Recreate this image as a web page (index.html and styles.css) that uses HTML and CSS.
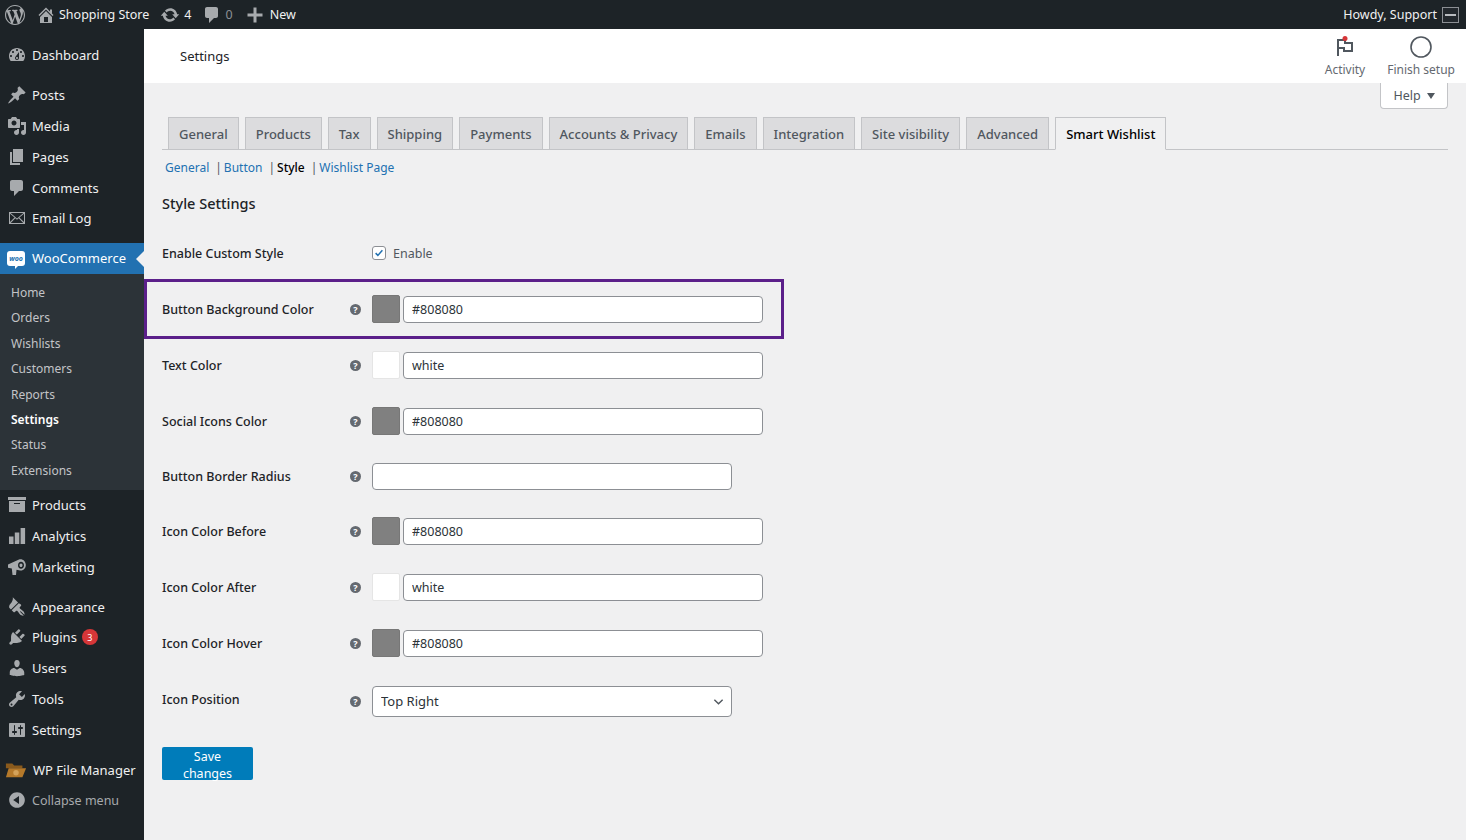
FILE: index.html
```html
<!DOCTYPE html>
<html lang="en">
<head>
  <meta charset="UTF-8">
  <title>Settings</title>
  <link rel="stylesheet" href="styles.css">
</head>
<body>
  <div class="topbar">
    <div class="top-left">
      <svg class="top-wp" viewBox="0 0 20 20"><path d="M20 10c0-5.51-4.49-10-10-10C4.48 0 0 4.49 0 10c0 5.52 4.48 10 10 10 5.51 0 10-4.48 10-10zM7.78 15.37L4.37 6.22c.55-.02 1.17-.08 1.17-.08.5-.06.44-1.13-.06-1.11 0 0-1.45.11-2.37.11-.18 0-.37 0-.58-.01C4.12 2.69 6.87 1.11 10 1.11c2.33 0 4.45.87 6.05 2.34-.68-.11-1.65.39-1.65 1.58 0 .74.45 1.36.9 2.1.35.61.55 1.36.55 2.46 0 1.49-1.4 5-1.4 5l-3.03-8.37c.54-.02.82-.17.82-.17.5-.05.44-1.25-.06-1.22 0 0-1.44.12-2.38.12-.87 0-2.33-.12-2.33-.12-.5-.03-.56 1.2-.06 1.22l.92.08 1.26 3.41zM17.41 10c.24-.64.74-1.87.43-4.25.7 1.29 1.05 2.71 1.05 4.25 0 3.29-1.73 6.24-4.4 7.78.97-2.59 1.94-5.2 2.92-7.78zM6.1 18.09C3.12 16.65 1.11 13.53 1.11 10c0-1.3.23-2.48.72-3.59C3.25 10.3 4.67 14.2 6.1 18.09zm4.03-6.63l2.58 6.98c-.86.29-1.76.45-2.71.45-.79 0-1.57-.11-2.29-.33.81-2.38 1.62-4.74 2.42-7.1z"/></svg>
      <span class="top-item site"><svg viewBox="0 0 20 20"><path d="M16 8.5l1.53 1.53-1.06 1.06L10 4.62l-6.47 6.47-1.06-1.06L10 2.5l4 4v-2h2v4zm-6-2.46l6 5.99V18H4v-5.97zM12 17v-5H8v5h4z"/></svg>Shopping Store</span>
      <span class="top-item updates"><svg viewBox="0 0 20 20"><path d="M10.2 3.28c3.53 0 6.43 2.61 6.92 6h2.08l-3.5 4-3.5-4h2.32c-.45-1.97-2.21-3.44-4.32-3.44-1.45 0-2.73.71-3.54 1.78L4.95 5.66C6.23 4.2 8.11 3.28 10.2 3.28zm-.4 13.44c-3.52 0-6.43-2.61-6.92-6H.8l3.5-4c1.17 1.33 2.33 2.67 3.5 4H5.48c.45 1.97 2.21 3.44 4.32 3.44 1.45 0 2.73-.71 3.54-1.78l1.71 1.95c-1.28 1.46-3.15 2.39-5.25 2.39z"/></svg>4</span>
      <span class="top-item comments"><svg viewBox="0 0 20 20"><path d="M5 2h9c1.1 0 2 .9 2 2v7c0 1.1-.9 2-2 2h-2l-5 5v-5H5c-1.1 0-2-.9-2-2V4c0-1.1.9-2 2-2z"/></svg><span class="muted">0</span></span>
      <span class="top-item new"><svg viewBox="0 0 20 20"><path d="M17.5 8.5v3h-6v6h-3v-6h-6v-3h6v-6h3v6h6z"/></svg>New</span>
    </div>
    <div class="top-right">Howdy, Support<span class="avatar"><i></i></span></div>
  </div>

  <div class="layout">
    <nav class="sidebar">
      <ul class="menu first">
        <li><svg viewBox="0 0 20 20"><path d="M3.76 16h12.48c1.1-1.37 1.76-3.11 1.76-5 0-4.42-3.58-8-8-8s-8 3.58-8 8c0 1.89.66 3.63 1.76 5zM10 4c.55 0 1 .45 1 1s-.45 1-1 1-1-.45-1-1 .45-1 1-1zM6 6c.55 0 1 .45 1 1s-.45 1-1 1-1-.45-1-1 .45-1 1-1zm8 0c.55 0 1 .45 1 1s-.45 1-1 1-1-.45-1-1 .45-1 1-1zm-5.37 5.55L12 7v6c0 1.1-.9 2-2 2s-2-.9-2-2c0-.57.24-1.08.63-1.45zM4 10c.55 0 1 .45 1 1s-.45 1-1 1-1-.45-1-1 .45-1 1-1zm12 0c.55 0 1 .45 1 1s-.45 1-1 1-1-.45-1-1 .45-1 1-1zm-5 3c0-.55-.45-1-1-1s-1 .45-1 1 .45 1 1 1 1-.45 1-1z"/></svg>Dashboard</li>
      </ul>
      <ul class="menu">
        <li><svg viewBox="0 0 20 20"><path d="M10.44 3.02l1.82-1.82 6.36 6.35-1.83 1.82c-1.05-.68-2.48-.57-3.41.36l-.75.75c-.92.93-1.04 2.35-.35 3.41l-1.83 1.82-2.41-2.41-2.8 2.79c-.42.42-3.38 2.71-3.8 2.29s1.86-3.39 2.28-3.81l2.79-2.79L4.1 9.36l1.83-1.82c1.05.69 2.48.57 3.4-.36l.75-.75c.93-.92 1.05-2.35.36-3.41z"/></svg>Posts</li>
        <li><svg viewBox="0 0 20 20"><path d="M13 11V4c0-.55-.45-1-1-1h-1.67L9 1H5L3.67 3H2c-.55 0-1 .45-1 1v7c0 .55.45 1 1 1h10c.55 0 1-.45 1-1zM7 4.5c1.38 0 2.5 1.12 2.5 2.5S8.38 9.5 7 9.5 4.5 8.38 4.5 7 5.62 4.5 7 4.5zM14 6h5v10.5c0 1.38-1.12 2.5-2.5 2.5S14 17.88 14 16.5s1.12-2.5 2.5-2.5c.17 0 .34.02.5.05V9h-3V6zm-4 8.05V13h2v3.5c0 1.38-1.12 2.5-2.5 2.5S7 17.88 7 16.5 8.12 14 9.5 14c.17 0 .34.02.5.05z"/></svg>Media</li>
        <li><svg viewBox="0 0 20 20"><path d="M6 15V2h10v13H6zm-1 1h8v2H3V5h2v11z"/></svg>Pages</li>
        <li><svg viewBox="0 0 20 20"><path d="M5 2h9c1.1 0 2 .9 2 2v7c0 1.1-.9 2-2 2h-2l-5 5v-5H5c-1.1 0-2-.9-2-2V4c0-1.1.9-2 2-2z"/></svg>Comments</li>
        <li><svg viewBox="0 0 20 20"><path fill-rule="evenodd" d="M2 4h16v12H2V4zm1.6 1L10 10.4 16.4 5H3.6zM3 5.7v8.2l4.6-4.3L3 5.7zm.7 9.3h12.6l-4.6-4.7L10 11.8 8.300 10.300 3.700 15zM17 13.900V5.700l-4.600 3.900 4.600 4.300z"/></svg>Email Log</li>
      </ul>
      <div class="woo-group">
        <div class="woo-head">
          <span class="woo-logo"><b>woo</b></span>WooCommerce
        </div>
        <ul class="submenu">
          <li>Home</li>
          <li>Orders</li>
          <li>Wishlists</li>
          <li>Customers</li>
          <li>Reports</li>
          <li class="current">Settings</li>
          <li>Status</li>
          <li>Extensions</li>
        </ul>
      </div>
      <ul class="menu flush">
        <li><svg viewBox="0 0 20 20"><path d="M19 2v3H1V2h18zM2 6h16v11H2V6zm11 3V8H7v1h6z"/></svg>Products</li>
        <li><svg viewBox="0 0 20 20"><path d="M2 10.500h4.500V18H2zM7.800 6.500h4.500V18H7.800zM13.600 2h4.500v16h-4.500z"/></svg>Analytics</li>
        <li><svg viewBox="0 0 20 20"><path fill-rule="evenodd" d="M1 7.500l11-5c3-1.200 6.500 1.200 6.800 5 .2 3.800-2.600 6.500-5.600 6L9.500 12.800 9 18H5.500l-.7-6.500-3.800-.8v-3.200zM14 4.800c-1.700 0-3 1.500-3 3.500s1.300 3.500 3 3.500 3-1.500 3-3.500-1.300-3.500-3-3.500zm0 1.700c.9 0 1.500.8 1.500 1.800s-.6 1.800-1.500 1.800-1.500-.8-1.500-1.800.6-1.800 1.500-1.800z"/></svg>Marketing</li>
      </ul>
      <ul class="menu">
        <li><svg viewBox="0 0 20 20"><path d="M14.480 11.060L7.410 3.990l1.500-1.500c.5-.56 2.300-.47 3.510.32 1.210.8 1.430 1.280 2.910 2.100 1.180.64 2.450 1.260 4.450.85zm-.71.71L6.700 4.700 4.930 6.470c-.39.39-.39 1.020 0 1.410l1.060 1.060c.39.39.39 1.030 0 1.420-.6.6-1.430 1.110-2.210 1.690-.35.26-.7.53-1.010.84-1.340 1.340-1.780 3.200-1.240 3.740l3.360-3.360c.2-.2.51-.2.71 0 .19.19.19.51 0 .7l-3.360 3.370c.54.54 2.400.1 3.740-1.240.31-.31.58-.66.84-1.010.58-.78 1.090-1.610 1.690-2.210.39-.39 1.030-.39 1.420 0l1.060 1.060c.39.39 1.020.39 1.410 0z" transform="rotate(-90 10 10)"/></svg>Appearance</li>
        <li><svg viewBox="0 0 20 20"><path d="M13.110 4.360L9.870 7.600 8 5.730l3.240-3.240c.35-.34 1.050-.2 1.560.32.52.51.66 1.210.31 1.550zm-8 1.770l.91-1.120 9.010 9.010-1.190.84c-.71.71-2.630 1.160-3.820 1.160H6.140L4.900 17.260c-.59.59-1.540.59-2.120 0-.59-.58-.59-1.530 0-2.120l1.240-1.240v-3.880c0-1.130.4-3.190 1.090-3.890zm7.260 3.970l3.240-3.240c.34-.35 1.040-.21 1.550.31.52.51.66 1.210.31 1.550l-3.240 3.250z"/></svg>Plugins<span class="badge">3</span></li>
        <li><svg viewBox="0 0 20 20"><path d="M10 9.250c-2.270 0-2.730-3.440-2.730-3.440C7 4.020 7.820 2 9.970 2c2.160 0 2.980 2.020 2.710 3.810 0 0-.41 3.440-2.680 3.440zm0 2.570L12.720 10c2.390 0 4.520 2.330 4.520 4.530v2.490s-3.650 1.130-7.240 1.130c-3.650 0-7.240-1.130-7.240-1.130v-2.490c0-2.250 1.940-4.480 4.470-4.480z"/></svg>Users</li>
        <li><svg viewBox="0 0 20 20"><path d="M16.680 9.770c-1.340 1.340-3.300 1.670-4.950.99l-5.410 6.520c-.99.99-2.590.99-3.580 0s-.99-2.590 0-3.570l6.520-5.420c-.68-1.650-.35-3.610.99-4.950 1.280-1.280 3.120-1.620 4.720-1.060l-2.890 2.890 2.820 2.820 2.860-2.870c.53 1.580.18 3.390-1.080 4.650zM3.810 16.210c.4.39 1.040.39 1.430 0 .4-.4.4-1.040 0-1.430-.39-.4-1.030-.4-1.430 0-.39.39-.39 1.030 0 1.430z"/></svg>Tools</li>
        <li><svg viewBox="0 0 20 20"><path d="M18 16V4c0-.55-.45-1-1-1H3c-.55 0-1 .45-1 1v12c0 .55.45 1 1 1h14c.55 0 1-.45 1-1zM8 11h1c.55 0 1 .45 1 1s-.45 1-1 1H8v1.500c0 .28-.22.5-.5.5s-.5-.22-.5-.5V13H6c-.55 0-1-.45-1-1s.45-1 1-1h1V5.500c0-.28.22-.5.5-.5s.5.22.5.5V11zm5-2h-1c-.55 0-1-.45-1-1s.45-1 1-1h1V5.500c0-.28.22-.5.5-.5s.5.22.5.5V7h1c.55 0 1 .45 1 1s-.45 1-1 1h-1v5.500c0 .28-.22.5-.5.5s-.5-.22-.5-.5V9z"/></svg>Settings</li>
      </ul>
      <ul class="menu">
        <li><svg class="folder" viewBox="0 0 24 20"><path fill="#8a5a1c" d="M1 3h7l2 2h9v3H1z"/><path fill="#b5792a" d="M1 18L4 8h19l-4 10z"/><circle cx="12" cy="13" r="3" fill="#d4a25a"/></svg>WP File Manager</li>
        <li class="collapse"><svg viewBox="0 0 20 20"><path d="M10 2.160c4.330 0 7.840 3.510 7.840 7.840s-3.510 7.840-7.840 7.840S2.160 14.330 2.160 10 5.710 2.160 10 2.160zm2 11.720V6.120L6.180 9.970z"/></svg>Collapse menu</li>
      </ul>
    </nav>

    <main class="main">
      <header class="page-head">
        <h1>Settings</h1>
        <div class="head-actions">
          <div class="head-action">
            <svg class="flag" viewBox="0 0 24 24"><path d="M5 21V5h7v3h7v8h-8v-3H5" fill="none" stroke="#50575e" stroke-width="2"/><circle cx="12" cy="3.500" r="2.500" fill="#d63638"/></svg>
            <span>Activity</span>
          </div>
          <div class="head-action setup">
            <svg class="ring" viewBox="0 0 24 24"><circle cx="12" cy="12" r="10" fill="none" stroke="#50575e" stroke-width="1.600"/></svg>
            <span>Finish setup</span>
          </div>
        </div>
      </header>

      <div class="content">
        <div class="help-wrap"><div class="help-tab">Help<i class="help-arrow"></i></div></div>

        <div class="tabs">
          <a class="tab">General</a>
          <a class="tab">Products</a>
          <a class="tab">Tax</a>
          <a class="tab">Shipping</a>
          <a class="tab">Payments</a>
          <a class="tab">Accounts &amp; Privacy</a>
          <a class="tab">Emails</a>
          <a class="tab">Integration</a>
          <a class="tab">Site visibility</a>
          <a class="tab">Advanced</a>
          <a class="tab active">Smart Wishlist</a>
        </div>

        <div class="subnav">
          <a>General</a><span class="sep">|</span><a>Button</a><span class="sep">|</span><b>Style</b><span class="sep">|</span><a>Wishlist Page</a>
        </div>

        <h2>Style Settings</h2>

        <form class="settings">
          <div class="row enable-row">
            <label>Enable Custom Style</label>
            <span class="tip none"></span>
            <span class="check-field">
              <span class="checkbox"><svg viewBox="0 0 16 16"><path d="M3.500 8.200l3 3 6-7" fill="none" stroke="#2271b1" stroke-width="2"/></svg></span>Enable
            </span>
          </div>
          <div class="row highlight">
            <label>Button Background Color</label>
            <span class="tip">?</span>
            <span class="swatch grey"></span>
            <input class="text" type="text" value="#808080">
          </div>
          <div class="row">
            <label>Text Color</label>
            <span class="tip">?</span>
            <span class="swatch white"></span>
            <input class="text" type="text" value="white">
          </div>
          <div class="row">
            <label>Social Icons Color</label>
            <span class="tip">?</span>
            <span class="swatch grey"></span>
            <input class="text" type="text" value="#808080">
          </div>
          <div class="row short">
            <label>Button Border Radius</label>
            <span class="tip">?</span>
            <input class="text wide" type="text">
          </div>
          <div class="row">
            <label>Icon Color Before</label>
            <span class="tip">?</span>
            <span class="swatch grey"></span>
            <input class="text" type="text" value="#808080">
          </div>
          <div class="row">
            <label>Icon Color After</label>
            <span class="tip">?</span>
            <span class="swatch white"></span>
            <input class="text" type="text" value="white">
          </div>
          <div class="row">
            <label>Icon Color Hover</label>
            <span class="tip">?</span>
            <span class="swatch grey"></span>
            <input class="text" type="text" value="#808080">
          </div>
          <div class="row tall">
            <label>Icon Position</label>
            <span class="tip">?</span>
            <span class="select-wrap">
              <select class="select"><option>Top Right</option></select>
              <svg class="chevron" viewBox="0 0 12 8"><path d="M1.500 1.500L6 6l4.500-4.500" fill="none" stroke="#50575e" stroke-width="1.500"/></svg>
            </span>
          </div>
          <button class="save" type="button">Save changes</button>
        </form>
      </div>
    </main>
  </div>
</body>
</html>
```
FILE: styles.css
```css
* { box-sizing: border-box; }
html, body { margin: 0; padding: 0; height: 840px; overflow: hidden; }
body { background: #f0f0f1; font-family: "Noto Sans", sans-serif; font-size: 12.5px; color: #1d2327; }
ul { list-style: none; margin: 0; padding: 0; }

.topbar { height: 29px; background: #1d2327; color: #f0f0f1; display: flex; justify-content: space-between; align-items: center; padding-right: 7px; font-size: 12.5px; }
.top-left { display: flex; align-items: center; }
.topbar svg { fill: #a7aaad; }
.top-wp { width: 20px; height: 20px; margin-left: 5px; }
.top-item { display: flex; align-items: center; }
.top-item svg { width: 20px; height: 20px; }
.site { margin-left: 11px; gap: 3px; }
.updates { margin-left: 11px; gap: 4px; }
.comments { margin-left: 11px; gap: 3px; }
.new { margin-left: 12px; gap: 5px; }
.muted { color: #8c8f94; }
.top-right { display: flex; align-items: center; gap: 5px; }
.avatar { width: 17px; height: 16px; border: 1px solid #8c8f94; background: #23282d; display: flex; align-items: center; padding-left: 2px; }
.avatar i { display: block; width: 11px; height: 2px; background: #b9bcc0; }

.layout { display: flex; height: 811px; }
.sidebar { width: 144px; flex: none; background: #1d2327; color: #f0f0f1; font-size: 13px; padding-top: 11px; }
.menu { margin-top: 9px; }
.menu.first { margin-top: 0; }
.menu.flush { margin-top: 0; }
.menu li { height: 30.8px; display: flex; align-items: center; padding-left: 7px; }
.menu li svg { width: 20px; height: 20px; flex: none; margin-right: 5px; fill: #a7aaad; }
.menu li svg.folder { width: 22px; margin-left: -2px; margin-right: 6px; }
.menu li.collapse { color: #a7aaad; font-size: 12.5px; }
.badge { width: 16px; height: 16px; margin-left: 5px; border-radius: 50%; background: #d63638; color: #fff; font-size: 9px; display: flex; align-items: center; justify-content: center; }

.woo-group { margin-top: 9px; }
.woo-head { height: 31px; background: #2271b1; color: #fff; display: flex; align-items: center; padding-left: 7px; position: relative; }
.woo-head::after { content: ""; position: absolute; right: 0; top: 8px; border: 8px solid transparent; border-right-color: #f0f0f1; border-left-width: 0; }
.woo-logo { width: 18px; height: 15px; background: #fff; border-radius: 3px; margin-right: 7px; color: #2271b1; display: flex; align-items: center; justify-content: center; position: relative; }
.woo-logo b { font-size: 7px; font-weight: 700; font-style: italic; line-height: 1; }
.woo-logo::after { content: ""; position: absolute; left: 8px; bottom: -3px; border: 2px solid transparent; border-top-color: #fff; border-left-color: #fff; }
.submenu { background: #2c3338; padding: 6px 0 7px; height: 216px; color: #c3c4c7; font-size: 12px; }
.submenu li { height: 25.4px; display: flex; align-items: center; padding-left: 11px; }
.submenu li.current { color: #fff; font-weight: 600; }

.main { flex: 1; display: flex; flex-direction: column; }
.page-head { height: 54px; background: #fff; display: flex; justify-content: space-between; align-items: center; padding: 0 11px 0 36px; }
.page-head h1 { margin: 0; font-size: 13px; font-weight: 400; color: #1d2327; }
.head-actions { display: flex; gap: 22px; align-self: stretch; padding-top: 6px; }
.head-action { display: flex; flex-direction: column; align-items: center; color: #646970; font-size: 12px; }
.flag, .ring { width: 24px; height: 24px; margin-bottom: 2px; }

.content { padding: 0 18px; position: relative; flex: 1; }
.help-wrap { display: flex; justify-content: flex-end; height: 34px; }
.help-tab { width: 68px; height: 26px; background: #fff; border: 1px solid #c3c4c7; border-top: none; border-radius: 0 0 4px 4px; color: #50575e; font-size: 12.5px; display: flex; align-items: center; justify-content: center; gap: 6px; }
.help-arrow { width: 0; height: 0; border: 4px solid transparent; border-top: 6px solid #50575e; border-bottom: 0; }

.tabs { display: flex; gap: 6px; padding-left: 6px; height: 33px; border-bottom: 1px solid #c3c4c7; }
.tab { height: 33px; padding: 0 10px; background: #dcdcde; border: 1px solid #c3c4c7; color: #50575e; font-size: 13px; font-weight: 500; display: flex; align-items: center; }
.tab.active { background: #f0f0f1; border-bottom-color: #f0f0f1; color: #000; }

.subnav { margin-top: 8px; padding-left: 3px; font-size: 12px; height: 18px; display: flex; align-items: center; color: #2271b1; }
.subnav a { color: #2271b1; }
.subnav b { color: #000; font-weight: 500; }
.sep { color: #50575e; margin: 0 2px 0 6px; }

h2 { margin: 17px 0 0; font-size: 14.5px; line-height: 20px; font-weight: 500; color: #1d2327; }

.settings { margin-top: 12px; }
.row { width: 636px; height: 56px; margin-left: -16px; padding-left: 16px; display: flex; align-items: center; }
.row label { width: 188px; flex: none; font-weight: 500; color: #1d2327; }
.row.short { height: 54px; }
.row.tall { height: 60px; }
.row.tall label { margin-top: -4px; }
.row.highlight { outline: 3px solid #5b1f8a; outline-offset: -1px; }
.tip { width: 11px; height: 11px; flex: none; margin-right: 11px; border-radius: 50%; background: #646970; color: #fff; font-size: 9px; font-weight: 700; line-height: 11px; text-align: center; }
.tip.none { background: none; }
.swatch { width: 28px; height: 28px; flex: none; margin-right: 3px; border-radius: 2px; }
.swatch.grey { background: #808080; border: 1px solid #777; }
.swatch.white { background: #fff; border: 1px solid #e5e5e5; }
.text { width: 360px; height: 27px; padding: 0 8px; border: 1px solid #8c8f94; border-radius: 4px; background: #fff; color: #2c3338; font: inherit; font-size: 12.5px; }
.text.wide { width: 360px; }
.select-wrap { position: relative; display: block; width: 360px; height: 31px; }
.select { width: 100%; height: 31px; padding: 0 8px; appearance: none; border: 1px solid #8c8f94; border-radius: 4px; background: #fff; color: #2c3338; font: inherit; font-size: 13px; }
.chevron { position: absolute; right: 8px; top: 12px; width: 11px; height: 8px; }
.check-field { display: flex; align-items: center; gap: 7px; color: #50575e; }
.checkbox { width: 14px; height: 14px; border: 1px solid #8c8f94; border-radius: 3px; background: #fff; display: flex; }
.checkbox svg { width: 100%; height: 100%; }
.save { margin-top: 16px; width: 91px; height: 33px; border: none; border-radius: 2px; background: #007cba; color: #fff; font: inherit; font-size: 12.5px; }
```
